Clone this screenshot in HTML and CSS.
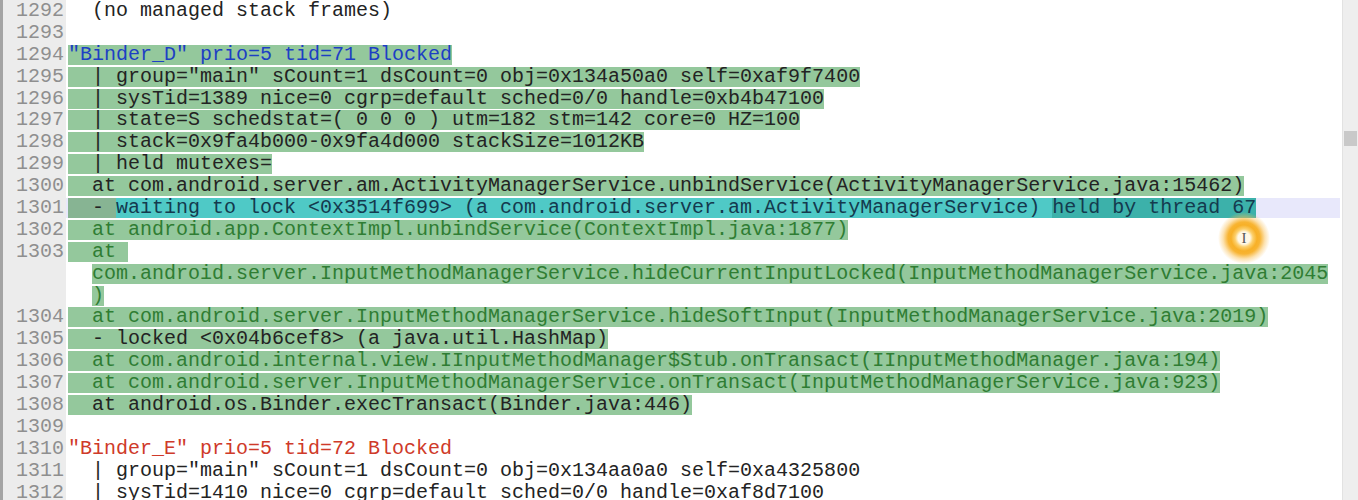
FILE: index.html
```html
<!DOCTYPE html>
<html>
<head>
<meta charset="utf-8">
<link rel="stylesheet" href="styles.css">
</head>
<body>
<div class="editor">
  <div class="main">
    <div class="row"><span class="ln">1292</span><span class="code">  (no managed stack frames)</span></div>
    <div class="row"><span class="ln">1293</span><span class="code"></span></div>
    <div class="row"><span class="ln">1294</span><span class="code"><span class="hl g blue">"Binder_D" prio=5 tid=71 Blocked</span></span></div>
    <div class="row"><span class="ln">1295</span><span class="code"><span class="hl g">  | group="main" sCount=1 dsCount=0 obj=0x134a50a0 self=0xaf9f7400</span></span></div>
    <div class="row"><span class="ln">1296</span><span class="code"><span class="hl g">  | sysTid=1389 nice=0 cgrp=default sched=0/0 handle=0xb4b47100</span></span></div>
    <div class="row"><span class="ln">1297</span><span class="code"><span class="hl g">  | state=S schedstat=( 0 0 0 ) utm=182 stm=142 core=0 HZ=100</span></span></div>
    <div class="row"><span class="ln">1298</span><span class="code"><span class="hl g">  | stack=0x9fa4b000-0x9fa4d000 stackSize=1012KB</span></span></div>
    <div class="row"><span class="ln">1299</span><span class="code"><span class="hl g">  | held mutexes=</span></span></div>
    <div class="row"><span class="ln">1300</span><span class="code"><span class="hl g">  at com.android.server.am.ActivityManagerService.unbindService(ActivityManagerService.java:15462)</span></span></div>
    <div class="row"><span class="ln">1301</span><span class="code current"><span class="hl dim">  - </span><span class="hl cy">waiting to lock &lt;0x3514f699&gt; (a com.android.server.am.ActivityManagerService) </span><span class="hl cy2">held by thread 67</span></span></div>
    <div class="row"><span class="ln">1302</span><span class="code"><span class="hl g green">  at android.app.ContextImpl.unbindService(ContextImpl.java:1877)</span></span></div>
    <div class="row"><span class="ln">1303</span><span class="code"><span class="hl g green">  at </span></span></div>
    <div class="row"><span class="ln"></span><span class="code"><span class="indent">  </span><span class="hl g green">com.android.server.InputMethodManagerService.hideCurrentInputLocked(InputMethodManagerService.java:2045</span></span></div>
    <div class="row"><span class="ln"></span><span class="code"><span class="indent">  </span><span class="hl g green">)</span></span></div>
    <div class="row"><span class="ln">1304</span><span class="code"><span class="hl g green">  at com.android.server.InputMethodManagerService.hideSoftInput(InputMethodManagerService.java:2019)</span></span></div>
    <div class="row"><span class="ln">1305</span><span class="code"><span class="hl g">  - locked &lt;0x04b6cef8&gt; (a java.util.HashMap)</span></span></div>
    <div class="row"><span class="ln">1306</span><span class="code"><span class="hl g green">  at com.android.internal.view.IInputMethodManager$Stub.onTransact(IInputMethodManager.java:194)</span></span></div>
    <div class="row"><span class="ln">1307</span><span class="code"><span class="hl g green">  at com.android.server.InputMethodManagerService.onTransact(InputMethodManagerService.java:923)</span></span></div>
    <div class="row"><span class="ln">1308</span><span class="code"><span class="hl g">  at android.os.Binder.execTransact(Binder.java:446)</span></span></div>
    <div class="row"><span class="ln">1309</span><span class="code"></span></div>
    <div class="row"><span class="ln">1310</span><span class="code red">"Binder_E" prio=5 tid=72 Blocked</span></div>
    <div class="row"><span class="ln">1311</span><span class="code">  | group="main" sCount=1 dsCount=0 obj=0x134aa0a0 self=0xa4325800</span></div>
    <div class="row"><span class="ln">1312</span><span class="code">  | sysTid=1410 nice=0 cgrp=default sched=0/0 handle=0xaf8d7100</span></div>
  </div>
  <div class="scrollbar"><div class="thumb"></div></div>
  <div class="click-mark"><span class="beam">I</span></div>
</div>
</body>
</html>
```

FILE: styles.css
```css
html, body {
  margin: 0;
  padding: 0;
  background: #ffffff;
  overflow: hidden;
}

.editor {
  position: relative;
  display: flex;
  width: 1358px;
  height: 500px;
  overflow: hidden;
  font-family: "Liberation Mono", "DejaVu Sans Mono", monospace;
  font-size: 20px;
  color: #232323;
}

.main {
  flex: 1;
  display: flex;
  flex-direction: column;
}

.row {
  display: flex;
  height: 21.9px;
  flex: none;
  white-space: pre;
}

.ln {
  width: 61px;
  flex: none;
  background: #ececec;
  border-left: 3px solid #a4a4a4;
  color: #8f8f8f;
  text-align: right;
  padding-right: 2px;
  line-height: 21.9px;
  box-sizing: content-box;
}

.code {
  flex: 1;
  display: block;
  padding-left: 2px;
  line-height: 21.9px;
}

.code.current {
  background: linear-gradient(#ffffff 0 1px, #e8e8fb 1px 21px, #ffffff 21px);
  margin-right: 2px;
}

.indent {
  display: inline-block;
  white-space: pre;
}

.hl {
  display: inline-block;
  height: 20px;
  line-height: 20px;
  vertical-align: top;
  margin-top: 1px;
}

.g { background: #94c89c; }
.dim { background: #87b493; }
.cy { background: #4fc9c6; color: #143a4e; }
.cy2 { background: #3cb1aa; color: #143a4e; }

.blue { color: #1d3fc4; }
.green { color: #2f7d33; }
.red { color: #cf3a2a; }

.scrollbar {
  width: 15px;
  flex: none;
  background: #eeeeee;
  border-left: 1px solid #e2e2e2;
  position: relative;
}

.thumb {
  margin-top: 131px;
  margin-left: 1px;
  width: 13px;
  height: 15px;
  background: #c9c9c9;
}

.click-mark {
  position: absolute;
  left: 1218px;
  top: 212px;
  width: 52px;
  height: 52px;
  border-radius: 50%;
  background: radial-gradient(circle, rgba(255,248,230,0.95) 0 6px, rgba(252,205,100,0.95) 9px, rgba(247,172,28,0.95) 13px, rgba(247,172,28,0.9) 16px, rgba(249,190,80,0.45) 21px, rgba(255,255,255,0) 26px);
  display: flex;
  align-items: center;
  justify-content: center;
}

.beam {
  font-family: "Liberation Serif", serif;
  font-size: 15px;
  color: #555555;
  line-height: 1;
}
```
